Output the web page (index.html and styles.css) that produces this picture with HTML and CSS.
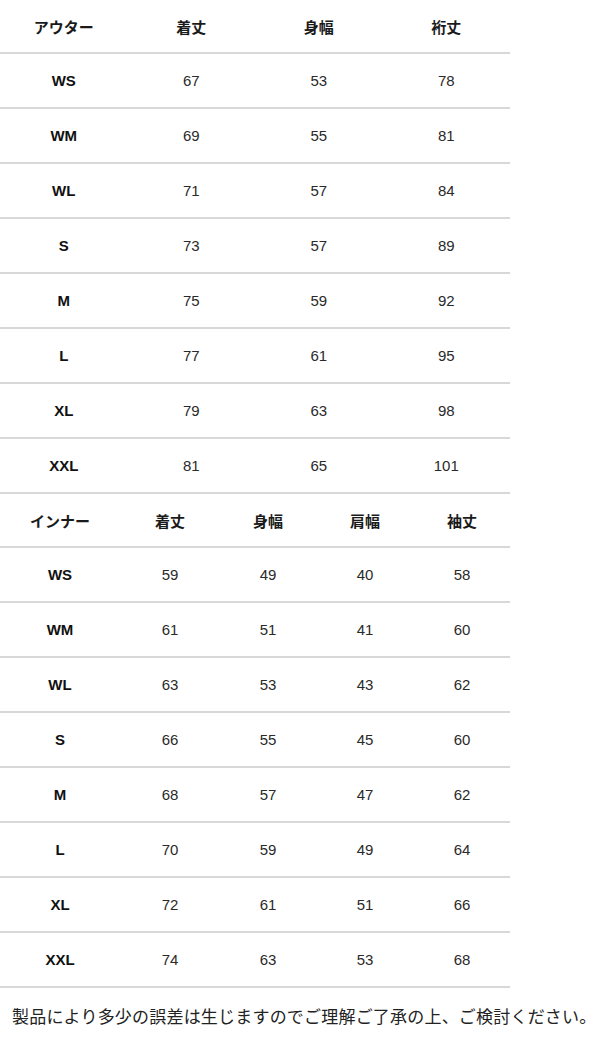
FILE: index.html
```html
<!DOCTYPE html>
<html lang="ja">
<head>
<meta charset="utf-8">
<link rel="stylesheet" href="styles.css">
</head>
<body>
<div class="page">
<table class="size-table outer">
  <thead>
    <tr><th>アウター</th><th>着丈</th><th>身幅</th><th>裄丈</th></tr>
  </thead>
  <tbody>
    <tr><td class="sz">WS</td><td>67</td><td>53</td><td>78</td></tr>
    <tr><td class="sz">WM</td><td>69</td><td>55</td><td>81</td></tr>
    <tr><td class="sz">WL</td><td>71</td><td>57</td><td>84</td></tr>
    <tr><td class="sz">S</td><td>73</td><td>57</td><td>89</td></tr>
    <tr><td class="sz">M</td><td>75</td><td>59</td><td>92</td></tr>
    <tr><td class="sz">L</td><td>77</td><td>61</td><td>95</td></tr>
    <tr><td class="sz">XL</td><td>79</td><td>63</td><td>98</td></tr>
    <tr><td class="sz">XXL</td><td>81</td><td>65</td><td>101</td></tr>
  </tbody>
</table>
<table class="size-table inner">
  <colgroup>
    <col class="c1"><col class="c2"><col class="c3"><col class="c4"><col class="c5">
  </colgroup>
  <thead>
    <tr><th>インナー</th><th>着丈</th><th>身幅</th><th>肩幅</th><th>袖丈</th></tr>
  </thead>
  <tbody>
    <tr><td class="sz">WS</td><td>59</td><td>49</td><td>40</td><td>58</td></tr>
    <tr><td class="sz">WM</td><td>61</td><td>51</td><td>41</td><td>60</td></tr>
    <tr><td class="sz">WL</td><td>63</td><td>53</td><td>43</td><td>62</td></tr>
    <tr><td class="sz">S</td><td>66</td><td>55</td><td>45</td><td>60</td></tr>
    <tr><td class="sz">M</td><td>68</td><td>57</td><td>47</td><td>62</td></tr>
    <tr><td class="sz">L</td><td>70</td><td>59</td><td>49</td><td>64</td></tr>
    <tr><td class="sz">XL</td><td>72</td><td>61</td><td>51</td><td>66</td></tr>
    <tr><td class="sz">XXL</td><td>74</td><td>63</td><td>53</td><td>68</td></tr>
  </tbody>
</table>
<p class="note">製品により多少の誤差は生じますのでご理解ご了承の上、ご検討ください。</p>
</div>
</body>
</html>
```
FILE: styles.css
```css
html, body {
  margin: 0;
  padding: 0;
  background: #ffffff;
}
body {
  font-family: "Liberation Sans", "Noto Sans CJK JP", sans-serif;
  color: #1e1e1e;
}
.page {
  width: 600px;
}
.size-table {
  width: 510px;
  border-collapse: collapse;
  table-layout: fixed;
}
.size-table th,
.size-table td {
  height: 53px;
  padding: 0;
  text-align: center;
  vertical-align: middle;
  border-bottom: 2px solid #d8d8d8;
  font-size: 15px;
}
.size-table th {
  font-family: "Noto Sans CJK JP", sans-serif;
  font-weight: 700;
  font-size: 15px;
  color: #1a1a1a;
  height: 52px;
}
.size-table td {
  color: #2a2a2a;
}
.size-table td.sz {
  font-weight: 700;
  color: #111;
}
.inner .c1 { width: 120px; }
.inner .c2 { width: 100px; }
.inner .c3 { width: 96px; }
.inner .c4 { width: 98px; }
.inner .c5 { width: 96px; }
.note {
  margin: 0;
  padding: 15px 0 0 12px;
  text-align: left;
  white-space: nowrap;
  font-family: "Noto Sans CJK JP", sans-serif;
  font-size: 17px;
  letter-spacing: 0.2px;
  color: #222;
  line-height: 26px;
}
```
